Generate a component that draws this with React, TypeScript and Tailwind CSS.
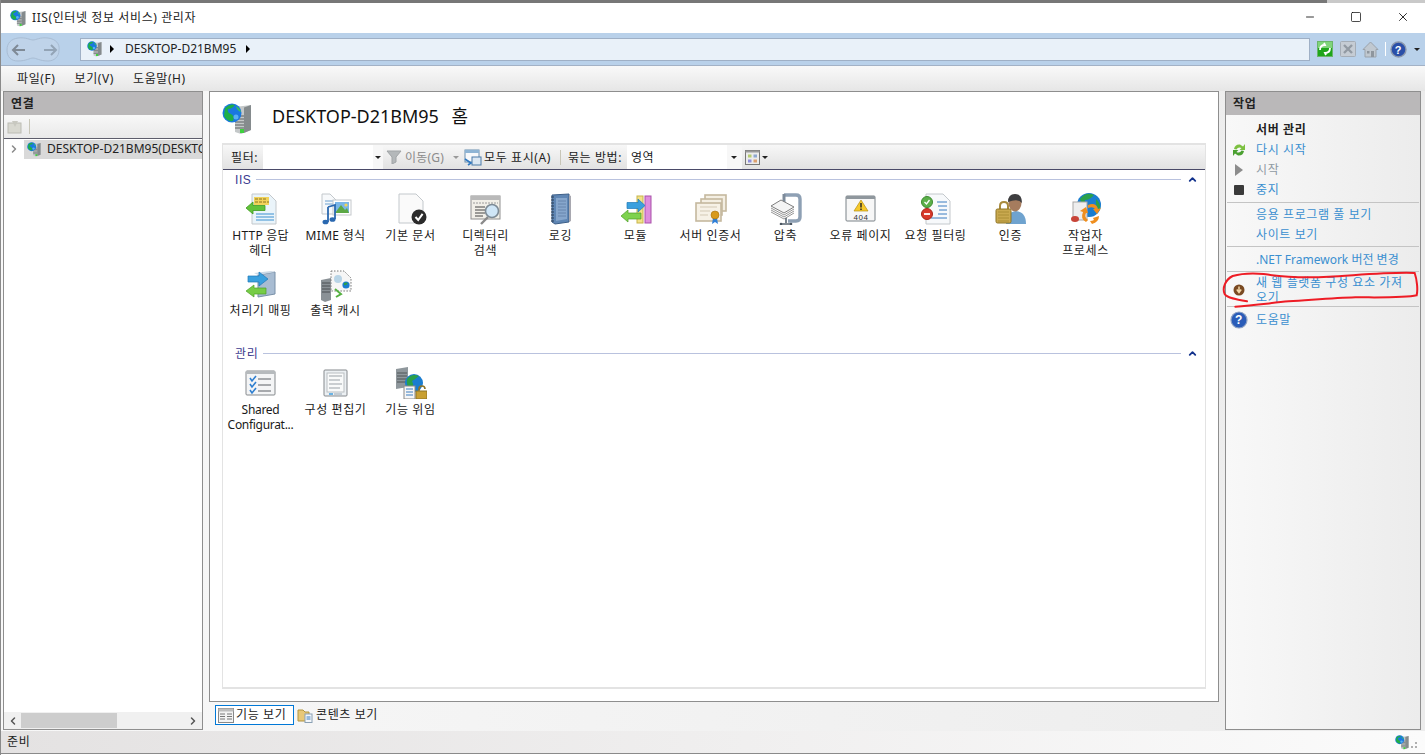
import React from 'react';
import { ChevronLeft, ChevronRight, ChevronUp, X, Minus, Square } from 'lucide-react';

const FONT = '[font-family:"Noto_Sans","Noto_Sans_CJK_KR",sans-serif]';

function ServerGlobe({ size = 16 }: { size?: number }) {
  return (
    <svg width={size} height={size} viewBox="0 0 32 32" className="shrink-0">
      <path d="M13 4 L29 2 L29 27 L19 31 L13 29Z" fill="#c4c8c9" />
      <path d="M22 4.5 L29 2 L29 27 L22 30Z" fill="#858b8d" />
      <path d="M13 13 L22 13 M13 16 L22 16 M13 19 L22 19 M13 22 L22 22 M13 25 L22 25" stroke="#5a6062" strokeWidth="1.2" />
      <rect x="18" y="26" width="4" height="4" fill="#3fd03f" />
      <circle cx="10" cy="10" r="9.5" fill="#1a78e0" />
      <path d="M3 5 Q8 0 13 2 Q10 6 6 6 Q5 10 9 11 Q13 13 11 18 Q5 19 2 13Z" fill="#1fae48" />
      <path d="M14 3 Q18 5 19 9 Q15 8 14 3Z" fill="#36c060" />
      <circle cx="14" cy="14" r="2.5" fill="#58b0f4" />
    </svg>
  );
}

function Doc({ x = 6, y = 1, w = 21, h = 29, fill = '#f7f9fb' }: { x?: number; y?: number; w?: number; h?: number; fill?: string }) {
  return (
    <path
      d={`M${x} ${y} H${x + w - 7} L${x + w} ${y + 7} V${y + h} H${x}Z`}
      fill={fill}
      stroke="#c3c8cc"
      strokeWidth="1"
    />
  );
}

function IconHttp() {
  return (
    <svg width="32" height="32" viewBox="0 0 32 32">
      <Doc x={7} y={1} w={24} h={30} fill="#eaf4fa" />
      <rect x="9" y="4" width="15" height="8" fill="#f2d35a" />
      <path d="M10 6 H22 M10 9 H24" stroke="#8c7420" strokeWidth="1" strokeDasharray="3 1" />
      <path d="M11 21 H29 M11 24 H29 M11 27 H29" stroke="#3a8fd0" strokeWidth="1" />
      <path d="M1 15 L8 9 V12.5 H20 V17.5 H8 V21Z" fill="#62c23a" stroke="#3e9a20" strokeWidth="0.8" />
    </svg>
  );
}

function IconMime() {
  return (
    <svg width="32" height="32" viewBox="0 0 32 32">
      <Doc x={2} y={1} w={15} h={20} />
      <path d="M5 8 H13 M5 11 H13" stroke="#6ba0d0" strokeWidth="1" />
      <rect x="13" y="7" width="18" height="15" fill="#fff" stroke="#c4c8cc" />
      <rect x="15" y="9" width="14" height="11" fill="#79b6e8" />
      <path d="M15 20 L21 12 L25 17 L27 15 L29 20Z" fill="#5ca845" />
      <circle cx="26" cy="12" r="1.6" fill="#f2d35a" />
      <path d="M8 14 L15 12 V26 M8 14 V29" stroke="#2a68b0" strokeWidth="1.8" fill="none" />
      <ellipse cx="5.5" cy="29" rx="3" ry="2.3" fill="#2a68b0" />
      <ellipse cx="12.5" cy="26.5" rx="3" ry="2.3" fill="#2a68b0" />
    </svg>
  );
}

function IconDefaultDoc() {
  return (
    <svg width="32" height="32" viewBox="0 0 32 32">
      <Doc x={4} y={1} w={24} h={29} fill="#fafafa" />
      <circle cx="24" cy="24" r="7.5" fill="#2b2b2b" />
      <path d="M20.5 24 L23.2 27 L27.6 20.8" stroke="#fff" strokeWidth="2" fill="none" />
    </svg>
  );
}

function IconDirBrowse() {
  return (
    <svg width="32" height="32" viewBox="0 0 32 32">
      <rect x="1" y="3" width="29" height="23" fill="#f1efe8" stroke="#8f8f8f" />
      <rect x="1" y="3" width="29" height="4" fill="#b9b9b9" />
      <path d="M3 10 H28" stroke="#9a9a9a" strokeWidth="1" strokeDasharray="2 1" />
      <path d="M5 14 H15 M5 17 H15 M5 20 H15 M5 23 H13" stroke="#444" strokeWidth="1" />
      <path d="M18 24 L11 31" stroke="#8a8a8a" strokeWidth="2.4" />
      <circle cx="22" cy="18" r="6.5" fill="#cfe6f7" stroke="#7d8b96" strokeWidth="1.6" />
    </svg>
  );
}

function IconLog() {
  return (
    <svg width="32" height="32" viewBox="0 0 32 32">
      <path d="M7 2 L24 1 V29 L10 31 L7 29Z" fill="#5f86b4" stroke="#3d5f88" />
      <path d="M11 5 H22 V26 L11 28Z" fill="#86a6cc" />
      <path d="M13 8 H21 M13 11 H21 M13 14 H21 M13 17 H21 M13 20 H21 M13 23 H21" stroke="#5f7fa6" strokeWidth="0.8" />
      <path d="M6 4 H9 M6 7 H9 M6 10 H9 M6 13 H9 M6 16 H9 M6 19 H9 M6 22 H9 M6 25 H9 M6 28 H9" stroke="#2d3f55" strokeWidth="1.2" />
      <path d="M24 2 L26 3 V28 L24 29Z" fill="#a8a8b0" />
    </svg>
  );
}

function IconModules() {
  return (
    <svg width="32" height="32" viewBox="0 0 32 32">
      <rect x="17" y="3" width="6" height="27" fill="#f2e28a" stroke="#c7b54b" />
      <rect x="25" y="3" width="6" height="27" fill="#de8ede" stroke="#a950a9" />
      <path d="M7 9.5 H18 V6 L25 12.5 L18 19 V15.5 H7Z" fill="#3aa0de" stroke="#1f78b8" strokeWidth="0.7" />
      <path d="M1 23 L8 17 V20 H21 V26 H8 V29Z" fill="#7ed24e" stroke="#4d9f28" strokeWidth="0.7" />
    </svg>
  );
}

function IconCert() {
  return (
    <svg width="32" height="32" viewBox="0 0 32 32">
      <rect x="10" y="2" width="21" height="16" fill="#f4efe3" stroke="#c5b89e" strokeWidth="1.6" />
      <rect x="6" y="6" width="21" height="16" fill="#f4efe3" stroke="#c5b89e" strokeWidth="1.6" />
      <rect x="1" y="10" width="25" height="18" fill="#f6f1e6" stroke="#c5b89e" strokeWidth="1.6" />
      <path d="M5 14 H22 M5 18 H15 M5 22 H13" stroke="#d3c9b5" strokeWidth="1" />
      <path d="M18 25 L17 31 L20 29 L23 31 L22 25Z" fill="#2f7fd8" />
      <circle cx="20" cy="22" r="4" fill="#d89a1c" stroke="#a8720e" strokeWidth="0.6" />
    </svg>
  );
}

function IconCompress() {
  return (
    <svg width="32" height="32" viewBox="0 0 32 32">
      <path d="M14 2 H26 Q30 2 30 6 V24 Q30 28 26 28 H18" fill="none" stroke="#8ea0b4" strokeWidth="3.4" />
      <path d="M14 1 V9" stroke="#7d8b9a" strokeWidth="3" />
      <path d="M1 13 L11 7 L24 14 L14 20Z" fill="#f4f4f4" stroke="#7e7e7e" />
      <path d="M1 15 L14 22 L24 16 M1 17 L14 24 L24 18 M1 19 L14 26 L24 20" stroke="#8a8a8a" fill="none" strokeWidth="0.9" />
      <path d="M16 25 V30 M10 31 H22" stroke="#5a6672" strokeWidth="1.6" />
      <circle cx="11" cy="31" r="1.3" fill="#4a5560" />
      <circle cx="21" cy="31" r="1.3" fill="#4a5560" />
    </svg>
  );
}

function Icon404() {
  return (
    <svg width="32" height="32" viewBox="0 0 32 32">
      <rect x="1" y="3" width="29" height="25" rx="1" fill="#f7f7f7" stroke="#7b8288" />
      <rect x="1" y="3" width="29" height="3" fill="#8f979d" />
      <path d="M16 7 L23 18 H9Z" fill="#f6c92c" stroke="#b78f10" strokeWidth="0.7" />
      <path d="M16 10 V14.5 M16 15.5 V17" stroke="#222" strokeWidth="1.4" />
      <text x="16" y="26.5" textAnchor="middle" fontSize="8" fill="#333" fontFamily="Liberation Sans, sans-serif">404</text>
    </svg>
  );
}

function IconFilter() {
  return (
    <svg width="32" height="32" viewBox="0 0 32 32">
      <Doc x={6} y={1} w={24} h={30} />
      <path d="M17 9 H27 M18 13 H27 M19 17 H27 M18 21 H27 M11 25 H27" stroke="#3a7cc0" strokeWidth="1" />
      <circle cx="7" cy="9" r="5.5" fill="#5bb04a" stroke="#3d8a30" />
      <path d="M4.5 9 L6.5 11 L9.5 7" stroke="#fff" strokeWidth="1.3" fill="none" />
      <circle cx="7" cy="21" r="5.5" fill="#d8392a" stroke="#a82518" />
      <path d="M4 21 H10" stroke="#fff" strokeWidth="1.8" />
    </svg>
  );
}

function IconAuth() {
  return (
    <svg width="32" height="32" viewBox="0 0 32 32">
      <path d="M11 31 Q11 19 21 18 Q31 19 31 31Z" fill="#6fa3cf" />
      <ellipse cx="20" cy="10" rx="6.5" ry="8.5" fill="#a67c5e" />
      <path d="M13 9 Q13 1 20 1 Q27 1 27 10 Q23 5 13 9Z" fill="#3e3e40" />
      <path d="M5 17 V13 Q5 9 9 9 Q13 9 13 13 V17" fill="none" stroke="#a88a3e" strokeWidth="2" />
      <rect x="1" y="16" width="15" height="14" rx="1.5" fill="#c9a94f" stroke="#8e7426" />
      <path d="M3 19 H14 M3 22 H14 M3 25 H14 M3 28 H14" stroke="#a48830" strokeWidth="0.8" />
    </svg>
  );
}

function IconWorker() {
  return (
    <svg width="32" height="32" viewBox="0 0 32 32">
      <circle cx="19" cy="12" r="12" fill="#1a7dd0" />
      <path d="M10 6 Q16 -2 24 2 Q20 7 15 7 Q14 11 18 13 Q12 14 10 6Z" fill="#2aa04a" />
      <path d="M26 6 Q31 10 30 17 Q25 14 26 6Z" fill="#2aa04a" />
      <rect x="3" y="9" width="14" height="18" fill="#eeeeee" stroke="#a7a7a7" />
      <ellipse cx="5" cy="26" rx="4" ry="3" fill="#c84438" />
      <path d="M18 12 Q26 9 28 16 L31 15 L27 21 L23 16 L25 16 Q23 13 18 15Z" fill="#ef8e1e" />
      <path d="M16 29 Q10 26 13 19 L10 18 L16 14 L18 20 L16 20 Q14 24 18 27Z" fill="#ef8e1e" />
      <path d="M22 31 Q29 29 29 23 L23 25 L24 27 Q22 28 20 28Z" fill="#ef8e1e" />
    </svg>
  );
}

function IconHandler() {
  return (
    <svg width="32" height="32" viewBox="0 0 32 32">
      <path d="M13 5 L30 2 V24 L13 27Z" fill="#a8bcd2" stroke="#7890a8" />
      <path d="M13 5 L9 3 L26 1 L30 2Z" fill="#ccd9e6" />
      <path d="M3 6 H14 V2 L23 9 L14 16 V12 H3Z" fill="#3aa0de" stroke="#1f78b8" strokeWidth="0.7" />
      <path d="M1 21 L9 15 V18 H21 V24 H9 V27Z" fill="#76cc46" stroke="#4d9f28" strokeWidth="0.7" />
    </svg>
  );
}

function IconCache() {
  return (
    <svg width="32" height="32" viewBox="0 0 32 32">
      <path d="M1 10 L11 8 V30 L5 32 L1 30Z" fill="#8a9196" />
      <path d="M2 13 H10 M2 16 H10 M2 19 H10 M2 22 H10" stroke="#4a4f52" strokeWidth="1" />
      <path d="M11 1 H24 L31 8 V21 H11Z" fill="#f6f6f6" stroke="#777" strokeDasharray="1.5 1.5" />
      <circle cx="18" cy="9" r="4" fill="#b8d4e6" />
      <path d="M15 19 L21 24 L16 27" stroke="#55b040" strokeWidth="2" fill="none" />
      <circle cx="26" cy="15" r="3.6" fill="#1a7dd0" />
      <path d="M24 13 Q26 12 28 13 Q26 16 24 15Z" fill="#2aa04a" />
    </svg>
  );
}

function IconShared() {
  return (
    <svg width="32" height="32" viewBox="0 0 32 32">
      <rect x="1" y="4" width="29" height="24" rx="1" fill="#f4f5f6" stroke="#85898d" />
      <rect x="1" y="4" width="29" height="3" fill="#b6babd" />
      <path d="M5 11 L7 14 L11 9 M5 17 L7 20 L11 15 M5 23 L7 26 L11 21" stroke="#2f7fd0" strokeWidth="1.6" fill="none" />
      <path d="M13 12 H26 M13 18 H26 M13 24 H26" stroke="#5a5f64" strokeWidth="1" />
    </svg>
  );
}

function IconEditor() {
  return (
    <svg width="32" height="32" viewBox="0 0 32 32">
      <rect x="4" y="3" width="23" height="26" rx="1" fill="#ecf0f3" stroke="#85898d" />
      <rect x="7" y="6" width="17" height="19" fill="#f9fafa" stroke="#b9bec2" />
      <path d="M9 9 H22 M9 13 H20 M9 17 H22 M9 21 H20" stroke="#9aa1a7" strokeWidth="1" />
      <path d="M9 27 H13" stroke="#4aa4e0" strokeWidth="1.6" />
      <path d="M14 27 H22" stroke="#b9c4cc" strokeWidth="1.6" />
    </svg>
  );
}

function IconDelegation() {
  return (
    <svg width="32" height="32" viewBox="0 0 32 32">
      <path d="M1 2 L13 0 V20 L1 22Z" fill="#8f979c" />
      <path d="M2 6 H12 M2 9 H12 M2 12 H12 M2 15 H12" stroke="#4e5456" strokeWidth="1" />
      <circle cx="19" cy="16" r="9" fill="#1a7dd0" />
      <path d="M12 12 Q17 6 24 9 Q19 13 17 14 Q20 20 15 22 Q11 19 12 12Z" fill="#2aa04a" />
      <rect x="9" y="19" width="11" height="13" fill="#f6f6f6" stroke="#8a8a8a" />
      <path d="M11 22 H18 M11 25 H18 M11 28 H18" stroke="#3a7cc0" strokeWidth="1" />
      <path d="M24 24 V22 Q24 19 27 19 Q30 19 30 22" fill="none" stroke="#8e7426" strokeWidth="1.6" />
      <rect x="21" y="24" width="11" height="8" fill="#c9a032" stroke="#8e7426" />
    </svg>
  );
}

type Feature = { label: string[]; icon: React.ReactNode; text?: string; short?: boolean };

const iisFeatures: Feature[] = [
  { label: ['HTTP 응답', '헤더'], icon: <IconHttp />, text: 'tracking-[0.2px]' },
  { label: ['MIME 형식'], icon: <IconMime />, text: 'tracking-[0.3px]' },
  { label: ['기본 문서'], icon: <IconDefaultDoc /> },
  { label: ['디렉터리', '검색'], icon: <IconDirBrowse /> },
  { label: ['로깅'], icon: <IconLog /> },
  { label: ['모듈'], icon: <IconModules /> },
  { label: ['서버 인증서'], icon: <IconCert /> },
  { label: ['압축'], icon: <IconCompress /> },
  { label: ['오류 페이지'], icon: <Icon404 /> },
  { label: ['요청 필터링'], icon: <IconFilter /> },
  { label: ['인증'], icon: <IconAuth /> },
  { label: ['작업자', '프로세스'], icon: <IconWorker /> },
  { label: ['처리기 매핑'], icon: <IconHandler />, short: true },
  { label: ['출력 캐시'], icon: <IconCache />, short: true }
];

const manageFeatures: Feature[] = [
  { label: ['Shared', 'Configurat...'], icon: <IconShared />, text: 'tracking-[-0.3px]' },
  { label: ['구성 편집기'], icon: <IconEditor /> },
  { label: ['기능 위임'], icon: <IconDelegation /> }
];

function FeatureItem({ feature }: { feature: Feature }) {
  return (
    <div className={`h-[77px] flex flex-col items-center pt-[5px] text-[12px] leading-[15px] text-[#1a1a1a] ${feature.text ?? ''}`}>
      <div className={`${feature.short ? 'h-[33px]' : 'h-[35px]'} flex items-start`}>{feature.icon}</div>
      {feature.label.map(line => (
        <div key={line} className="whitespace-nowrap">{line}</div>
      ))}
    </div>
  );
}

function GroupHeader({ title }: { title: string }) {
  return (
    <div className="h-[18px] flex items-center pl-[12px] pr-[7px]">
      <span className="text-[12px] pt-[1px] text-[#3b3b8f] [font-family:'Liberation_Sans','Noto_Sans_CJK_KR',sans-serif]">{title}</span>
      <div className="flex-1 h-px bg-[#b9c2de] ml-[5px]" />
      <ChevronUp className="w-[11px] h-[11px] ml-[6px] text-[#12328c]" strokeWidth={4} />
    </div>
  );
}

function DropArrow({ className = '' }: { className?: string }) {
  return <span className={`w-0 h-0 border-x-[3px] border-x-transparent border-t-[3px] border-t-[#222] ${className}`} />;
}

function ActionLink({ children, muted = false }: { children: React.ReactNode; muted?: boolean }) {
  return <span className={muted ? 'text-[#8f9aa3]' : 'text-[#3a8fd0]'}>{children}</span>;
}

function ActionRow({ icon, children, tall = false }: { icon?: React.ReactNode; children: React.ReactNode; tall?: boolean }) {
  return (
    <div className={`flex items-center ${tall ? 'h-[24px] pt-[1px]' : 'h-[20px]'}`}>
      <div className="w-[30px] flex justify-center pr-[4px] shrink-0">{icon}</div>
      <div className="min-w-0">{children}</div>
    </div>
  );
}

function Divider() {
  return <div className="h-px bg-[#c4c4c4] mx-[1px]" />;
}

export default function App() {
  return (
    <div className={`w-[1425px] h-[755px] overflow-hidden flex flex-col bg-[#f4f4f4] border-l border-[#8a8a8a] tracking-[0.6px] ${FONT}`}>
      {/* Top edge */}
      <div className="h-[3px] shrink-0 flex">
        <div className="w-[1326px] bg-[#777777]" />
        <div className="flex-1 bg-[#c9c9c9]" />
      </div>

      {/* Title bar */}
      <div className="h-[30px] shrink-0 bg-white flex items-center pl-[9px]">
        <ServerGlobe size={17} />
        <span className="ml-[5px] text-[12px] text-[#222]">IIS(인터넷 정보 서비스) 관리자</span>
        <div className="ml-auto flex items-center pr-[15px] pb-[2px] gap-[34px] text-black">
          <Minus className="w-[12px] h-[12px]" strokeWidth={1.6} absoluteStrokeWidth />
          <Square className="w-[12px] h-[12px]" strokeWidth={1.4} absoluteStrokeWidth />
          <X className="w-[14px] h-[14px]" strokeWidth={1.4} absoluteStrokeWidth />
        </div>
      </div>

      {/* Address bar */}
      <div className="h-[33px] shrink-0 bg-[#b9d1ea] border-b border-[#a3b2c6] flex items-center pl-[5px] pr-[5px]">
        <svg width="54" height="27" viewBox="0 0 54 27" className="shrink-0">
          <path d="M12 2 C20 1 24 4 27 4 C30 4 34 1 42 2 C50 3 54 8 53 14 C53 21 48 25 42 25 C34 25 30 22 27 22 C24 22 20 25 12 25 C5 25 1 21 1 14 C1 7 5 3 12 2Z" fill="#bfd3e9" stroke="#a9bdd4" />
          <path d="M7 14 H19 M12 9 L7 14 L12 19" stroke="#7f8a96" strokeWidth="2" fill="none" />
          <path d="M38 14 H50 M45 9 L50 14 L45 19" stroke="#93a4b6" strokeWidth="2" fill="none" />
        </svg>
        <div className="ml-[20px] w-[1230px] h-[23px] bg-[#e9f1f9] border border-[#9fb0c6] flex items-center pl-[6px] text-[12px] text-[#222] tracking-normal">
          <ServerGlobe size={16} />
          <span className="ml-[7px] w-0 h-0 border-y-[4px] border-y-transparent border-l-[4px] border-l-black" />
          <span className="ml-[11px]">DESKTOP-D21BM95</span>
          <span className="ml-[10px] w-0 h-0 border-y-[4px] border-y-transparent border-l-[4px] border-l-black" />
        </div>
        <div className="ml-[7px] flex items-center">
          <svg width="16" height="16" viewBox="0 0 16 16">
            <rect x="0.5" y="0.5" width="15" height="15" fill="#1ea51a" stroke="#6ab56a" />
            <rect x="1" y="1" width="14" height="6" fill="#7fd47a" />
            <path d="M3 9 Q3 4 8 4 L7 2 M13 7 Q13 12 8 12 L9 14" stroke="#fff" strokeWidth="1.8" fill="none" />
          </svg>
          <svg width="16" height="16" viewBox="0 0 16 16" className="ml-[7px]">
            <rect x="0.5" y="0.5" width="15" height="15" rx="1" fill="#c5ccd4" stroke="#a5adb6" />
            <path d="M4 4 L12 12 M12 4 L4 12" stroke="#929aa3" strokeWidth="2.4" />
          </svg>
          <svg width="17" height="17" viewBox="0 0 17 17" className="ml-[6px]">
            <path d="M8.5 1 L16 8.5 H14 V16 H3 V8.5 H1Z" fill="#c0c8d0" stroke="#9ba3ab" />
            <rect x="9" y="10" width="3" height="6" fill="#8e969e" />
            <rect x="5" y="10" width="2.5" height="2.5" fill="#8e969e" />
          </svg>
          <div className="ml-[6px] w-px h-[14px] bg-white" />
          <svg width="17" height="17" viewBox="0 0 17 17" className="ml-[4px]">
            <circle cx="8.5" cy="8.5" r="7.5" fill="#2a4fa8" stroke="#8c98ac" strokeWidth="1.4" />
            <text x="8.5" y="12.5" textAnchor="middle" fontSize="11" fontWeight="700" fill="#fff" fontFamily="Liberation Sans, sans-serif">?</text>
          </svg>
          <DropArrow className="ml-[7px]" />
        </div>
      </div>

      {/* Menu bar */}
      <div className="h-[25px] shrink-0 bg-gradient-to-b from-[#f9f9f9] to-[#e6e6e6] flex items-center pl-[16px] text-[12px] text-[#222]">
        <span>파일(F)</span>
        <span className="ml-[19px]">보기(V)</span>
        <span className="ml-[19px]">도움말(H)</span>
      </div>

      {/* Panels */}
      <div className="flex-1 min-h-0 flex pl-[2px] pb-[1px] bg-gradient-to-r from-[#f8f8f8] to-[#ececec]">
        {/* Connections */}
        <div className="w-[200px] shrink-0 border border-[#8e8e8e] flex flex-col bg-white">
          <div className="h-[23px] shrink-0 bg-[#bab8b9] flex items-center pl-[7px] text-[12px] font-bold text-[#222]">연결</div>
          <div className="h-[24px] shrink-0 bg-gradient-to-b from-[#f8f8f8] to-[#e9e9e9] border-b border-[#5d5d6b] flex items-center pl-[3px]">
            <svg width="16" height="16" viewBox="0 0 16 16">
              <rect x="1" y="4" width="13" height="10" fill="#d8d8d0" stroke="#bcbcb4" />
              <path d="M5 2 L11 2 L8 8Z" fill="#c8c8c0" />
            </svg>
            <div className="ml-[6px] w-px h-[15px] bg-[#c8c6b8]" />
          </div>
          <div className="h-[20px] shrink-0 flex items-center">
            <ChevronRight className="w-[12px] h-[12px] ml-[4px] text-[#8a8a8a]" strokeWidth={3} />
            <div className="ml-[4px] flex-1 min-w-0 h-[19px] bg-[#d9d9d9] flex items-center pl-[3px] overflow-hidden">
              <ServerGlobe size={15} />
              <span className="ml-[5px] text-[12px] text-[#222] whitespace-nowrap tracking-normal">DESKTOP-D21BM95(DESKTOP</span>
            </div>
          </div>
          <div className="flex-1" />
          <div className="h-[17px] shrink-0 bg-[#f0f0f0] flex items-center justify-between">
            <ChevronLeft className="w-[12px] h-[12px] ml-[3px] text-[#555]" strokeWidth={3} />
            <div className="w-[96px] h-[15px] bg-[#cdcdcd] mr-auto ml-[2px]" />
            <ChevronRight className="w-[12px] h-[12px] mr-[3px] text-[#555]" strokeWidth={3} />
          </div>
        </div>

        {/* Content */}
        <div className="w-[1010px] shrink-0 ml-[6px] flex flex-col">
          <div className="h-[611px] shrink-0 border border-[#8e8e8e] bg-white flex flex-col px-[12px] pb-[12px]">
            <div className="h-[51px] shrink-0 flex items-center">
              <div className="pt-[2px]"><ServerGlobe size={32} /></div>
              <span className="ml-[18px] pb-[2px] text-[18px] text-[#111] tracking-normal [word-spacing:8px]">DESKTOP-D21BM95 홈</span>
            </div>
            <div className="flex-1 min-h-0 border-y-2 border-x border-[#e3e3e3] flex flex-col">
              <div className="h-[25px] shrink-0 bg-gradient-to-b from-[#f7f7f7] to-[#e2e2e2] border-b border-[#4a4a68] flex items-center text-[12px] text-[#222]">
                <span className="ml-[8px] w-[32px] pt-[1px]">필터:</span>
                <div className="w-[110px] h-full bg-white" />
                <div className="w-[10px] h-full bg-[#f7f7f7] flex items-center justify-center"><DropArrow /></div>
                <svg width="16" height="14" viewBox="0 0 16 14" className="ml-[3px]">
                  <path d="M1 1 H15 L10 7 V12 L6 14 V7Z" fill="#b4b8ba" stroke="#a0a4a6" />
                </svg>
                <span className="ml-[3px] pt-[1px] text-[#8b8b8b] tracking-[0.2px]">이동(G)</span>
                <DropArrow className="ml-[9px] border-t-[#999]" />
                <svg width="18" height="17" viewBox="0 0 18 17" className="ml-[5px]">
                  <rect x="1" y="1" width="14" height="12" fill="#f7f9fb" stroke="#6b8fb0" />
                  <rect x="1" y="1" width="14" height="3" fill="#8eb4d4" />
                  <rect x="8" y="8" width="9" height="8" fill="#dbe7f2" stroke="#4a7aa8" />
                  <path d="M1 10 L7 14 L4 16" stroke="#2f78c0" strokeWidth="1.6" fill="none" />
                </svg>
                <span className="ml-[2px] pt-[1px]">모두 표시(A)</span>
                <div className="ml-[9px] w-px h-[15px] bg-[#c8c6b8]" />
                <span className="ml-[7px] w-[59px] pt-[1px] whitespace-nowrap">묶는 방법:</span>
                <div className="w-[100px] h-full bg-white flex items-center pl-[4px] pt-[1px]">영역</div>
                <div className="w-[15px] h-full bg-[#f7f7f7] flex items-center justify-center"><DropArrow /></div>
                <svg width="15" height="15" viewBox="0 0 15 15" className="ml-[3px]">
                  <rect x="0.5" y="0.5" width="14" height="14" fill="#ececec" stroke="#777" />
                  <rect x="0.5" y="0.5" width="14" height="2" fill="#9a9a9a" />
                  <rect x="3" y="4.5" width="3.5" height="3" fill="#b6cc70" />
                  <rect x="8.5" y="4.5" width="3.5" height="3" fill="#8ea8d0" />
                  <rect x="3" y="9.5" width="3.5" height="3" fill="#8f8fdc" />
                  <rect x="8.5" y="9.5" width="3.5" height="3" fill="#dca070" />
                </svg>
                <DropArrow className="ml-[2px]" />
              </div>

              <GroupHeader title="IIS" />
              <div className="grid grid-cols-[repeat(12,75px)]">
                {iisFeatures.map(feature => (
                  <FeatureItem key={feature.label[0]} feature={feature} />
                ))}
              </div>

              <div className="mt-[2px]">
                <GroupHeader title="관리" />
              </div>
              <div className="grid grid-cols-[repeat(12,75px)]">
                {manageFeatures.map(feature => (
                  <FeatureItem key={feature.label[0]} feature={feature} />
                ))}
              </div>
            </div>
          </div>

          {/* View tabs */}
          <div className="flex-1 flex items-start pt-[3px] pl-[6px] text-[12px] text-[#222]">
            <div className="h-[20px] w-[79px] bg-white border border-[#0078d7] flex items-center pl-[2px] whitespace-nowrap">
              <svg width="16" height="15" viewBox="0 0 16 15">
                <rect x="0.5" y="0.5" width="15" height="14" fill="#f3f3f3" stroke="#888" />
                <rect x="0.5" y="0.5" width="15" height="3" fill="#bdbdbd" />
                <path d="M2 6 H7 M2 8.5 H7 M2 11 H7 M9 6 H14 M9 8.5 H14 M9 11 H14" stroke="#777" />
              </svg>
              <span className="ml-[2px]">기능 보기</span>
            </div>
            <div className="h-[20px] ml-[3px] flex items-center">
              <svg width="16" height="16" viewBox="0 0 16 16">
                <path d="M1 3 H6 L8 5 H12 V14 H1Z" fill="#e8c878" stroke="#b09440" />
                <rect x="8" y="7" width="7" height="8.5" fill="#f4f7fa" stroke="#8aa0b4" />
                <path d="M9.5 10 H13.5 M9.5 12 H13.5" stroke="#3a7cc0" />
              </svg>
              <span className="ml-[3px]">콘텐츠 보기</span>
            </div>
          </div>
        </div>

        {/* Actions */}
        <div className="relative w-[196px] shrink-0 ml-[6px] border border-[#8e8e8e] flex flex-col bg-gradient-to-r from-[#f8f8f8] to-[#ececec] text-[12px]">
          <div className="h-[23px] shrink-0 bg-[#bab8b9] flex items-center pl-[7px] font-bold text-[#222]">작업</div>
          <div className="pt-[5px]">
            <ActionRow><span className="font-bold text-[#222]">서버 관리</span></ActionRow>
            <ActionRow
              icon={
                <svg width="14" height="14" viewBox="0 0 14 14">
                  <path d="M2 6 Q3 1 8 1.5 L11 3.5 L13 1 V7 H7.5 L9.5 5 Q6 3.5 4.5 6.5Z" fill="#7cc040" />
                  <path d="M12 8 Q11 13 6 12.5 L3 10.5 L1 13 V7 H6.5 L4.5 9 Q8 10.5 9.5 7.5Z" fill="#4aa030" />
                </svg>
              }
            >
              <ActionLink>다시 시작</ActionLink>
            </ActionRow>
            <ActionRow
              icon={
                <svg width="10" height="12" viewBox="0 0 10 12"><path d="M1 0 L9 6 L1 12Z" fill="#8c8c8c" /></svg>
              }
            >
              <ActionLink muted>시작</ActionLink>
            </ActionRow>
            <ActionRow icon={<div className="w-[10px] h-[10px] rounded-[1px] bg-[#3a3a3a]" />}>
              <ActionLink>중지</ActionLink>
            </ActionRow>
            <div className="h-[2px]" />
            <Divider />
            <div className="h-[2px]" />
            <ActionRow><ActionLink>응용 프로그램 풀 보기</ActionLink></ActionRow>
            <ActionRow><ActionLink>사이트 보기</ActionLink></ActionRow>
            <div className="h-[1px]" />
            <Divider />
            <ActionRow tall><span className="tracking-normal"><ActionLink>.NET Framework 버전 변경</ActionLink></span></ActionRow>
            <Divider />
            <div className="flex items-center h-[34px] pt-[1px] leading-[15px]">
              <div className="w-[30px] flex justify-center pr-[4px] shrink-0">
                <svg width="12" height="12" viewBox="0 0 12 12">
                  <circle cx="6" cy="6" r="5.5" fill="#7a4a22" />
                  <path d="M6 2.5 V7 M3.8 5.5 L6 8.5 L8.2 5.5" stroke="#f4d8a8" strokeWidth="1.5" fill="none" />
                </svg>
              </div>
              <div className="min-w-0 pr-[10px]"><ActionLink>새 웹 플랫폼 구성 요소 가져오기</ActionLink></div>
            </div>
            <Divider />
            <ActionRow
              tall
              icon={
                <svg width="18" height="18" viewBox="0 0 18 18">
                  <circle cx="9" cy="9" r="8" fill="#2a5cb8" stroke="#8ea2c4" strokeWidth="1.2" />
                  <text x="9" y="13" textAnchor="middle" fontSize="12" fontWeight="700" fill="#fff" fontFamily="Liberation Sans, sans-serif">?</text>
                </svg>
              }
            >
              <ActionLink>도움말</ActionLink>
            </ActionRow>
          </div>

          {/* Hand-drawn red mark over the action */}
          <svg className="absolute left-[-4px] top-[176px] pointer-events-none" width="200" height="42" viewBox="0 0 600 126">
            <path
              d="M75 100 C45 95 15 90 8 78 C0 60 10 35 32 24 C60 16 90 15 125 18 C170 25 240 30 320 26 C400 22 500 12 578 15 C585 35 588 65 584 82 C550 90 480 88 400 88 C340 90 280 95 200 100 C140 106 90 112 40 116"
              fill="none"
              stroke="#ee1c25"
              strokeWidth="6"
              strokeLinecap="round"
            />
          </svg>
        </div>
      </div>

      {/* Status bar */}
      <div className="h-[23px] shrink-0 bg-gradient-to-r from-[#e4e2e2] to-[#fbfbfb] border-b border-[#8a8a8a] flex items-center pl-[6px] text-[12px] text-[#222]">
        <span>준비</span>
        <div className="ml-auto pr-[8px] flex items-end">
          <ServerGlobe size={15} />
          <div className="ml-[1px] grid grid-cols-2 gap-[2px] mb-[2px]">
            <span className="w-[2px] h-[2px]" />
            <span className="w-[2px] h-[2px] bg-[#b0b0b0]" />
            <span className="w-[2px] h-[2px] bg-[#b0b0b0]" />
            <span className="w-[2px] h-[2px] bg-[#b0b0b0]" />
          </div>
        </div>
      </div>
      <div className="h-[1px] shrink-0 bg-white" />
    </div>
  );
}
